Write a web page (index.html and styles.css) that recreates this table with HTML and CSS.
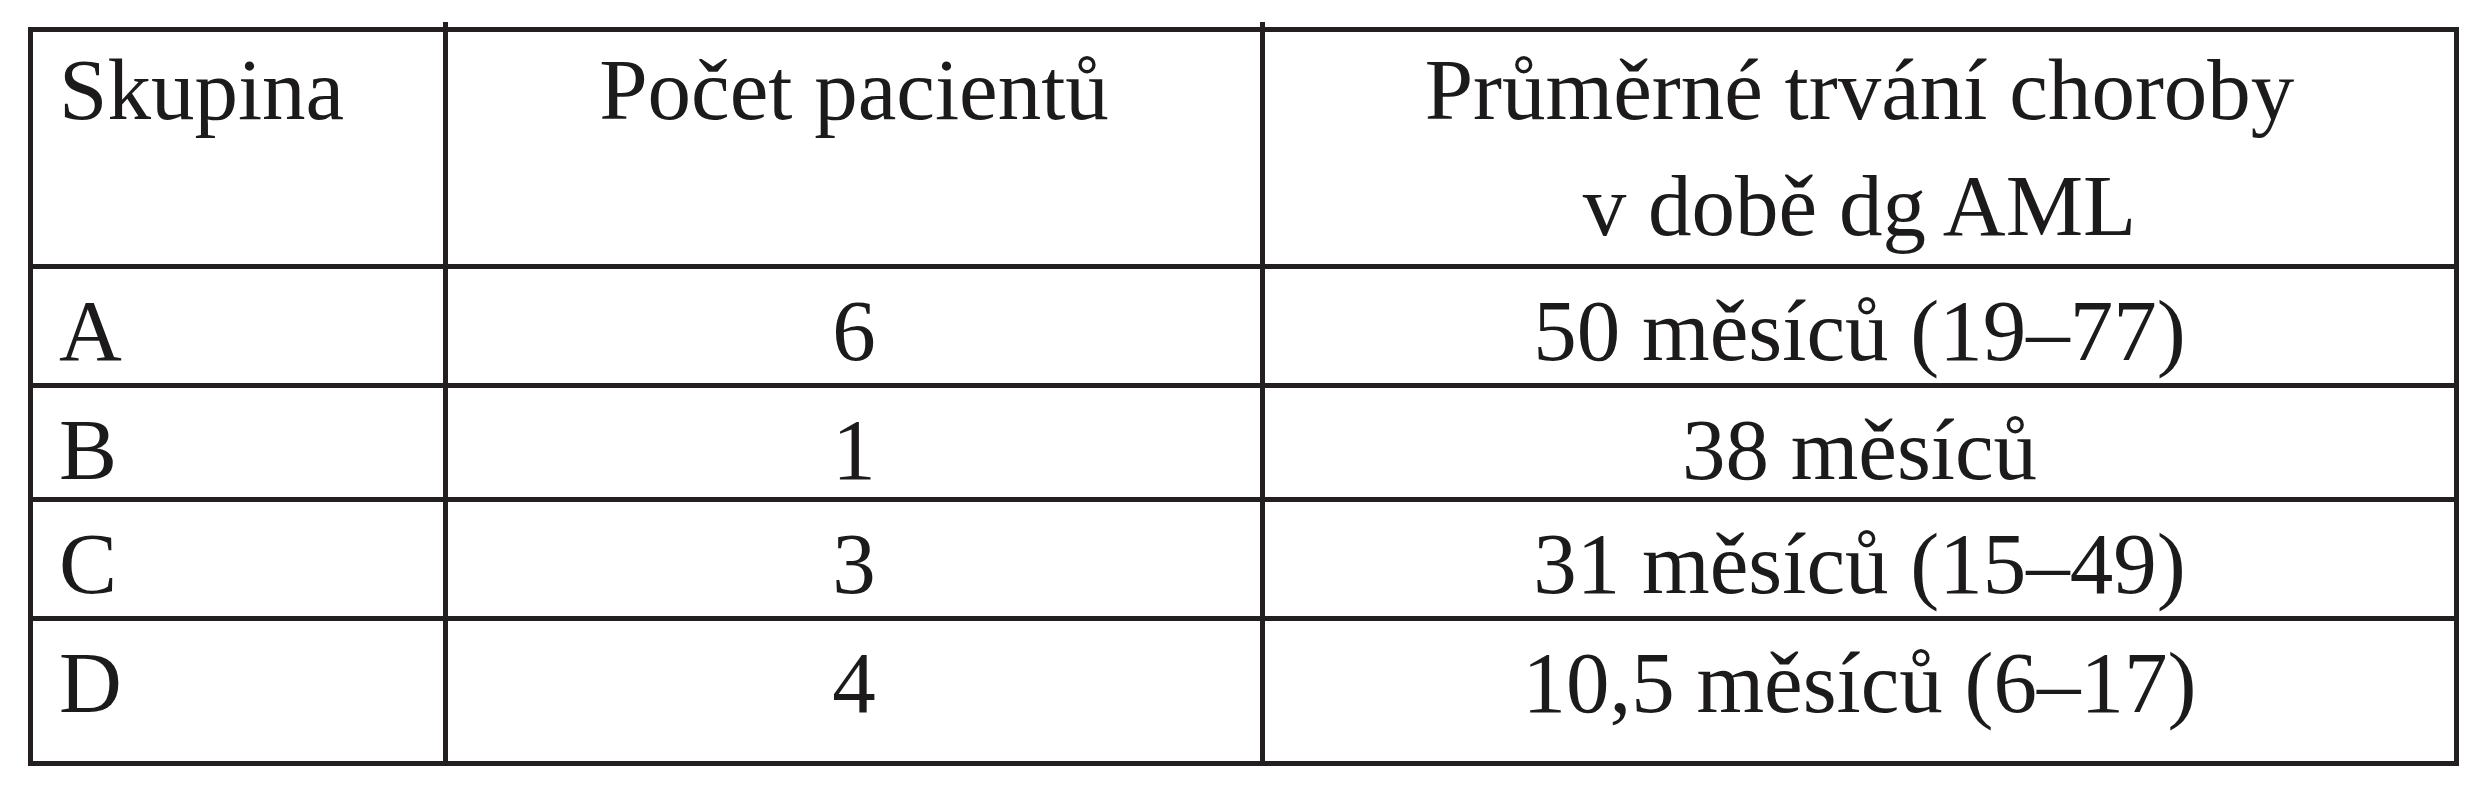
FILE: index.html
```html
<!DOCTYPE html>
<html lang="cs">
<head>
<meta charset="utf-8">
<title>Skupiny pacientů</title>
<link rel="stylesheet" href="styles.css">
</head>
<body>
<div class="table">
  <div class="cell head first">Skupina</div>
  <div class="cell head mid center">Počet pacientů</div>
  <div class="cell head last center">Průměrné trvání choroby<br>v době dg AML</div>

  <div class="cell row first">A</div>
  <div class="cell row mid center">6</div>
  <div class="cell row last center">50 měsíců (19–77)</div>

  <div class="cell row first">B</div>
  <div class="cell row mid center">1</div>
  <div class="cell row last center">38 měsíců</div>

  <div class="cell row first">C</div>
  <div class="cell row mid center">3</div>
  <div class="cell row last center">31 měsíců (15–49)</div>

  <div class="cell row end first">D</div>
  <div class="cell row end mid center">4</div>
  <div class="cell row end last center">10,5 měsíců (6–17)</div>
</div>
</body>
</html>
```
FILE: styles.css
```css
html, body {
  margin: 0;
  padding: 0;
  background: #ffffff;
}

body {
  padding: 27px 0 0 28px;
}

.table {
  display: grid;
  grid-template-columns: 415px 817px 1189px;
  grid-template-rows: 237px 119px 114px 119px 140px;
  width: 2421px;
  border: 5px solid #231f20;
  font-family: "Liberation Serif", "Times New Roman", serif;
  font-size: 87px;
  color: #1c1a1b;
}

.cell {
  box-sizing: border-box;
  border-bottom: 5px solid #231f20;
  white-space: nowrap;
}

.cell.end {
  border-bottom: none;
}

.first,
.mid {
  border-right: 5px solid #231f20;
}

.first {
  padding-left: 26px;
}

.center {
  text-align: center;
}

.head {
  position: relative;
  line-height: 116px;
  padding-top: 0;
}

.head.first::after,
.head.mid::after {
  content: "";
  position: absolute;
  top: -10px;
  right: -5px;
  width: 5px;
  height: 10px;
  background: #231f20;
}

.row {
  line-height: 100px;
  padding-top: 12px;
}
```
